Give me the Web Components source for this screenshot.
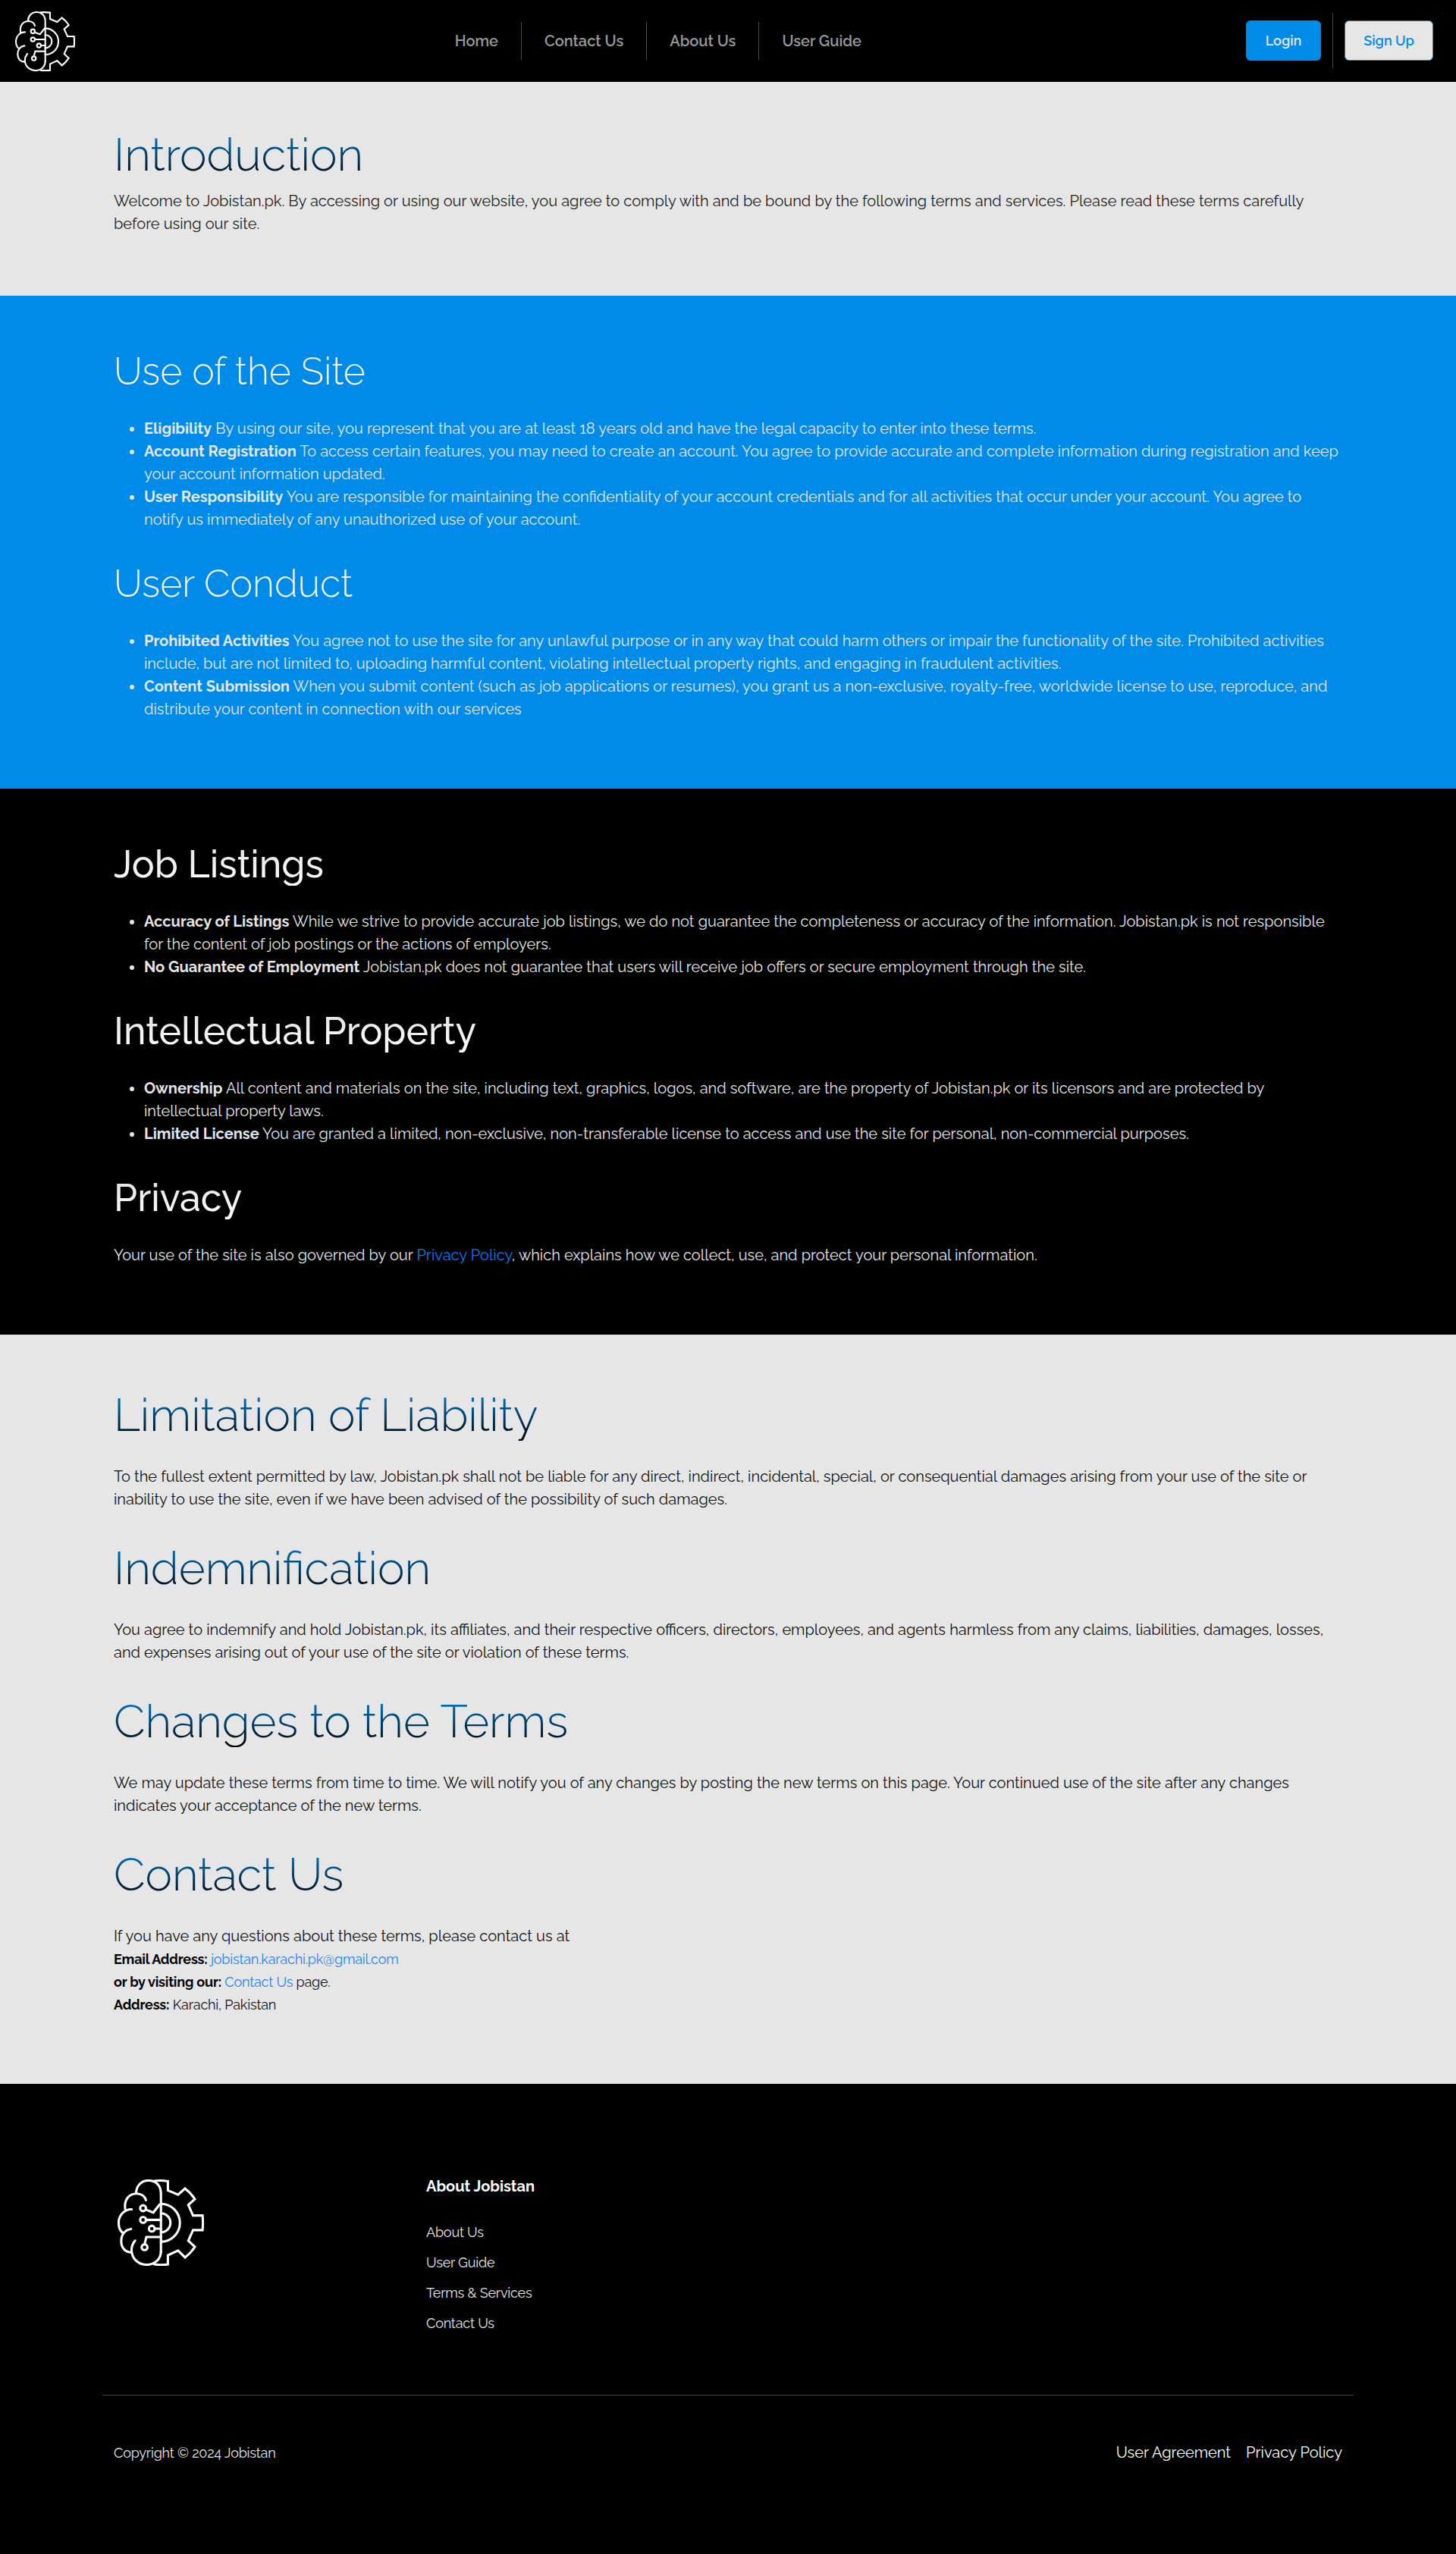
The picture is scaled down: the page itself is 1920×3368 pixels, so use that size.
<!DOCTYPE html>
<html lang="en">
<head>
<meta charset="utf-8">
<title>Jobistan - Terms &amp; Services</title>
<style>
html,body{margin:0;padding:0;background:#000}
body{font-family:Raleway,Lato,"Open Sans",sans-serif;font-size:20px;line-height:30px}
</style>
</head>
<body>
<site-header></site-header>

<page-section tone="light" first>
  <section-title size="60">Introduction</section-title>
  <text-block style="--gap:11px">
    <text-line>Welcome to Jobistan.pk. By accessing or using our website, you agree to comply with and be bound by the following terms and services. Please read these terms carefully</text-line>
    <text-line>before using our site.</text-line>
  </text-block>
</page-section>

<page-section tone="blue">
  <section-title size="50">Use of the Site</section-title>
  <text-block list>
    <text-line bullet><b>Eligibility</b> By using our site, you represent that you are at least 18 years old and have the legal capacity to enter into these terms.</text-line>
    <text-line bullet><b>Account Registration</b> To access certain features, you may need to create an account. You agree to provide accurate and complete information during registration and keep</text-line>
    <text-line>your account information updated.</text-line>
    <text-line bullet><b>User Responsibility</b> You are responsible for maintaining the confidentiality of your account credentials and for all activities that occur under your account. You agree to</text-line>
    <text-line>notify us immediately of any unauthorized use of your account.</text-line>
  </text-block>
  <section-title size="50">User Conduct</section-title>
  <text-block list>
    <text-line bullet><b>Prohibited Activities</b> You agree not to use the site for any unlawful purpose or in any way that could harm others or impair the functionality of the site. Prohibited activities</text-line>
    <text-line>include, but are not limited to, uploading harmful content, violating intellectual property rights, and engaging in fraudulent activities.</text-line>
    <text-line bullet><b>Content Submission</b> When you submit content (such as job applications or resumes), you grant us a non-exclusive, royalty-free, worldwide license to use, reproduce, and</text-line>
    <text-line>distribute your content in connection with our services</text-line>
  </text-block>
</page-section>

<page-section tone="dark">
  <section-title size="50">Job Listings</section-title>
  <text-block list>
    <text-line bullet><b>Accuracy of Listings</b> While we strive to provide accurate job listings, we do not guarantee the completeness or accuracy of the information. Jobistan.pk is not responsible</text-line>
    <text-line>for the content of job postings or the actions of employers.</text-line>
    <text-line bullet><b>No Guarantee of Employment</b> Jobistan.pk does not guarantee that users will receive job offers or secure employment through the site.</text-line>
  </text-block>
  <section-title size="50">Intellectual Property</section-title>
  <text-block list>
    <text-line bullet><b>Ownership</b> All content and materials on the site, including text, graphics, logos, and software, are the property of Jobistan.pk or its licensors and are protected by</text-line>
    <text-line>intellectual property laws.</text-line>
    <text-line bullet><b>Limited License</b> You are granted a limited, non-exclusive, non-transferable license to access and use the site for personal, non-commercial purposes.</text-line>
  </text-block>
  <section-title size="50">Privacy</section-title>
  <text-block>
    <text-line style="--link:#007bff">Your use of the site is also governed by our <a>Privacy Policy</a>, which explains how we collect, use, and protect your personal information.</text-line>
  </text-block>
</page-section>

<page-section tone="light">
  <section-title size="60">Limitation of Liability</section-title>
  <text-block>
    <text-line>To the fullest extent permitted by law, Jobistan.pk shall not be liable for any direct, indirect, incidental, special, or consequential damages arising from your use of the site or</text-line>
    <text-line>inability to use the site, even if we have been advised of the possibility of such damages.</text-line>
  </text-block>
  <section-title size="60">Indemnification</section-title>
  <text-block>
    <text-line>You agree to indemnify and hold Jobistan.pk, its affiliates, and their respective officers, directors, employees, and agents harmless from any claims, liabilities, damages, losses,</text-line>
    <text-line>and expenses arising out of your use of the site or violation of these terms.</text-line>
  </text-block>
  <section-title size="60">Changes to the Terms</section-title>
  <text-block>
    <text-line>We may update these terms from time to time. We will notify you of any changes by posting the new terms on this page. Your continued use of the site after any changes</text-line>
    <text-line>indicates your acceptance of the new terms.</text-line>
  </text-block>
  <section-title size="60">Contact Us</section-title>
  <text-block>
    <text-line>If you have any questions about these terms, please contact us at</text-line>
    <text-line small><b>Email Address:</b> <a>jobistan.karachi.pk@gmail.com</a></text-line>
    <text-line small><b>or by visiting our:</b> <a>Contact Us</a> page.</text-line>
    <text-line small><b>Address:</b> Karachi, Pakistan</text-line>
  </text-block>
</page-section>

<site-footer></site-footer>

<script>
const shadow = (el, html) => { el.attachShadow({mode:'open'}).innerHTML = html; };

class BrandLogo extends HTMLElement {
  connectedCallback(){
    shadow(this, `<style>:host{display:block;flex:none;width:var(--s,79px);height:var(--s,79px)}svg{display:block;width:100%;height:100%}</style>
    <svg viewBox="59 43 237 237" fill="none" stroke="#fff" stroke-width="6.4" stroke-linecap="round" stroke-linejoin="miter">
      <path d="M178 242V82C178 60 164 46 144 46S110 61 110 81"/>
      <path d="M137 100C134 89 124 82 111 82C91 82 76 98 80 125"/>
      <path d="M98 125C78 124 62 142 62 162C62 176 67 185 74 190"/>
      <path d="M96 179C79 181 69 195 69 212C69 232 81 243 98 243"/>
      <path d="M107 211C99 221 96 232 98 243C101 264 120 277 139 277C162 277 178 261 178 240"/>
      <path d="M160 47Q180 45 197 48V73L225 85L244 68Q260 80 271 97L253 113L266 142H292Q294 162 292 182H266L253 211L271 228Q260 245 244 257L225 238L197 251V276Q180 279 160 276"/>
      <path d="M178 110A52 52 0 0 1 178 214M178 136A26 26 0 0 1 178 188"/>
      <circle cx="129" cy="122" r="8"/><circle cx="129" cy="154" r="8"/><circle cx="153" cy="178" r="8"/><circle cx="133" cy="229" r="8"/>
      <path d="M137 126L157 134L174 112M137 154H178M161 178H178M133 221L138 201H178"/>
    </svg>`);
  }
}

class SiteHeader extends HTMLElement {
  connectedCallback(){
    shadow(this, `<style>
      :host{display:flex;height:108px;box-sizing:border-box;background:#000;align-items:center;justify-content:space-between;padding:0 30px 0 20px}
      .left{width:549.8px}
      nav{display:flex;align-items:center;flex:1;color:#999;font-weight:600}
      nav>span{display:flex;align-items:center;height:50px;padding:0 30px;border-right:1px solid #4a4a4a;white-space:nowrap}
      nav>span:last-child{border:0}
      .acts{display:flex;align-items:center;font-size:18px;font-weight:600;margin-bottom:1px}
      .btn{display:flex;align-items:center;justify-content:center;box-sizing:border-box;height:53px;border:1px solid #008be8;border-radius:6px;background:#008be8;color:#e6e6e6}
      .in{width:99px}.up{width:117px;background:#e6e6e6;color:#008be8}
      i{width:1px;height:73px;background:#444;margin:0 15px}
    </style>
    <div class="left"><brand-logo></brand-logo></div>
    <nav><span>Home</span><span>Contact Us</span><span>About Us</span><span>User Guide</span></nav>
    <div class="acts"><div class="btn in">Login</div><i></i><div class="btn up">Sign Up</div></div>`);
  }
}

class PageSection extends HTMLElement {
  connectedCallback(){
    shadow(this, `<style>
      :host{display:flow-root;padding:68px 150px 91px;box-sizing:border-box}
      :host([tone=light]){background:#e6e6e6;color:#111;--from:#008be8;--to:#000;--hw:300}
      :host([tone=blue]){background:#008be8;color:#e6e6e6;--from:#e6e6e6;--to:#fff;--hw:300}
      :host([tone=dark]){background:#000;color:#e6e6e6;--from:#e0e0e0;--to:#fff;--hw:500}
      :host([first]){padding-top:58px;padding-bottom:81px;color:#222}
    </style><slot></slot>`);
  }
}

class SectionTitle extends HTMLElement {
  connectedCallback(){
    const s = +this.getAttribute('size');
    shadow(this, `<style>
      :host{display:block;box-sizing:border-box;padding-top:2px;font-size:${s}px;line-height:${s*1.2}px;height:${s*1.2}px;font-weight:var(--hw);background:linear-gradient(var(--from),var(--to));-webkit-background-clip:text;background-clip:text;color:transparent}
      :host(:not(:first-child)){margin-top:39px}
    </style><slot></slot>`);
  }
}

class TextBlock extends HTMLElement {
  connectedCallback(){
    shadow(this, `<style>:host{display:flex;flex-direction:column;margin-top:var(--gap,31px)}
      :host([list]){padding-left:40px}</style><slot></slot>`);
  }
}

class TextLine extends HTMLElement {
  connectedCallback(){
    shadow(this, `<style>
      :host{display:block;box-sizing:border-box;height:30px;padding-top:1px;white-space:nowrap}
      :host([small]) span{font-size:18px;letter-spacing:-.2px}
      :host([bullet])::before{content:"";display:inline-block;width:6px;height:6px;border-radius:50%;background:currentColor;vertical-align:3px;margin:0 13px 0 -19px}
      ::slotted(b){font-weight:700}
      :host([small]) ::slotted(b){color:#000}
      ::slotted(a){color:var(--link,#1c84ee)}
    </style><span><slot></slot></span>`);
  }
}

class SiteFooter extends HTMLElement {
  connectedCallback(){
    shadow(this, `<style>
      :host{display:block;background:#000;color:#e6e6e6;height:620px;box-sizing:border-box;padding:120px 135px 0}
      .cols{display:flex;padding-left:20px}
      brand-logo{--s:114px;margin:6px 293px 0 0}
      .col{display:flex;flex-direction:column;font-size:18px;letter-spacing:-.2px}
      .col>div{height:30px;margin-bottom:10px}
      .col>.h{font-size:20px;font-weight:700;color:#fff;margin-bottom:31px;letter-spacing:normal}
      hr{height:1px;border:0;background:#444;margin:69px 0 60px}
      .end{display:flex;align-items:baseline;justify-content:space-between;padding:0 15px}
      .copy{font-size:18px;letter-spacing:-.2px}
      .links{display:flex;gap:20px;color:#fff}
    </style>
    <div class="cols"><brand-logo></brand-logo><div class="col">
      <div class="h">About Jobistan</div>
      <div>About Us</div><div>User Guide</div><div>Terms &amp; Services</div><div>Contact Us</div>
    </div></div><hr>
    <div class="end"><div class="copy">Copyright © 2024 Jobistan</div>
    <div class="links"><span>User Agreement</span><span>Privacy Policy</span></div></div>`);
  }
}

customElements.define('brand-logo', BrandLogo);
customElements.define('site-header', SiteHeader);
customElements.define('page-section', PageSection);
customElements.define('section-title', SectionTitle);
customElements.define('text-block', TextBlock);
customElements.define('text-line', TextLine);
customElements.define('site-footer', SiteFooter);
</script>
</body>
</html>
